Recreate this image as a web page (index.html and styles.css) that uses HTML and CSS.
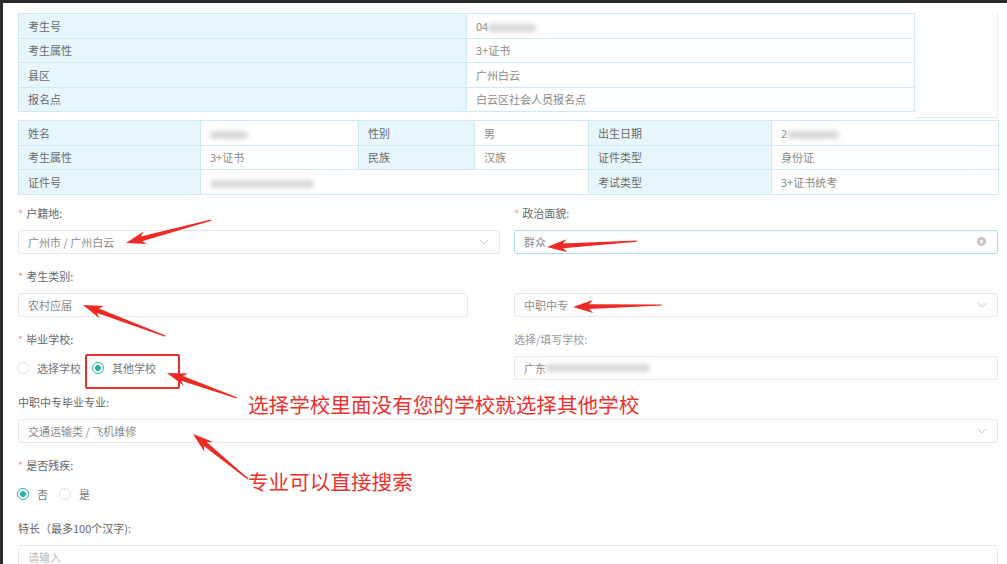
FILE: index.html
```html
<!DOCTYPE html>
<html lang="zh-CN">

<head>
    <meta charset="UTF-8" />
    <meta name="viewport" content="width=device-width, initial-scale=1.0" />
    <title>报名信息</title>
    <link rel="stylesheet" href="styles.css">
</head>

<body>
    <div class="screen">
        <div class="top">
            <table class="info info-a">
                <tr><td class="k">考生号</td><td>04<span class="blur" style="width:48px"></span></td></tr>
                <tr><td class="k">考生属性</td><td>3+证书</td></tr>
                <tr><td class="k">县区</td><td>广州白云</td></tr>
                <tr><td class="k">报名点</td><td>白云区社会人员报名点</td></tr>
            </table>
            <div class="side"></div>
        </div>

        <table class="info info-b">
            <colgroup>
                <col style="width:182px"><col style="width:158px"><col style="width:116px">
                <col style="width:114px"><col style="width:183px"><col style="width:227px">
            </colgroup>
            <tr>
                <td class="k">姓名</td><td><span class="blur" style="width:38px"></span></td>
                <td class="k">性别</td><td>男</td>
                <td class="k">出生日期</td><td>2<span class="blur" style="width:52px"></span></td>
            </tr>
            <tr>
                <td class="k">考生属性</td><td>3+证书</td>
                <td class="k">民族</td><td>汉族</td>
                <td class="k">证件类型</td><td>身份证</td>
            </tr>
            <tr>
                <td class="k">证件号</td><td colspan="3"><span class="blur" style="width:104px"></span></td>
                <td class="k">考试类型</td><td>3+证书统考</td>
            </tr>
        </table>

        <div class="form">
            <div class="field">
                <div class="label"><i>*</i>户籍地:</div>
                <div class="box">广州市 / 广州白云
                    <svg class="arrow-down" viewBox="0 0 10 6"><polyline points="1,1 5,5 9,1" /></svg>
                </div>
            </div>
            <div class="field">
                <div class="label"><i>*</i>政治面貌:</div>
                <div class="box focus">群众
                    <svg class="clear" viewBox="0 0 10 10"><circle cx="5" cy="5" r="5" /><path d="M3.2 3.2 6.8 6.8M6.8 3.2 3.2 6.8" /></svg>
                </div>
            </div>

            <div class="field">
                <div class="label"><i>*</i>考生类别:</div>
                <div class="box short">农村应届</div>
            </div>
            <div class="field">
                <div class="label"></div>
                <div class="box">中职中专
                    <svg class="arrow-down" viewBox="0 0 10 6"><polyline points="1,1 5,5 9,1" /></svg>
                </div>
            </div>

            <div class="field">
                <div class="label"><i>*</i>毕业学校:</div>
                <div class="radios">
                    <span class="radio"><b class="dot"></b>选择学校</span>
                    <span class="radio marked"><b class="dot on"></b>其他学校</span>
                </div>
            </div>
            <div class="field">
                <div class="label faint">选择/填写学校:</div>
                <div class="box">广东<span class="blur" style="width:104px"></span></div>
            </div>

            <div class="field wide">
                <div class="label">中职中专毕业专业:</div>
                <div class="box">交通运输类 / 飞机维修
                    <svg class="arrow-down" viewBox="0 0 10 6"><polyline points="1,1 5,5 9,1" /></svg>
                </div>
            </div>

            <div class="field wide">
                <div class="label"><i>*</i>是否残疾:</div>
                <div class="radios">
                    <span class="radio"><b class="dot on"></b>否</span>
                    <span class="radio"><b class="dot"></b>是</span>
                </div>
            </div>

            <div class="field wide">
                <div class="label">特长（最多100个汉字):</div>
                <div class="box placeholder">请输入</div>
            </div>
        </div>
    </div>

    <!-- 标注：红色箭头和说明文字 -->
    <svg class="marks" viewBox="0 0 1007 564">
        <g fill="#ee2a24">
            <polygon transform="translate(126,243) rotate(-15.1)" points="0,0 20,-6.5 16,-2.4 88,-0.6 88,0.6 16,2.4 20,6.5" />
            <polygon transform="translate(547,247) rotate(-3.8)" points="0,0 20,-6.5 16,-2.4 90,-0.6 90,0.6 16,2.4 20,6.5" />
            <polygon transform="translate(83,305) rotate(20.7)" points="0,0 20,-6.5 16,-2.4 88,-0.6 88,0.6 16,2.4 20,6.5" />
            <polygon transform="translate(573,307) rotate(-1.3)" points="0,0 20,-6.5 16,-2.4 89,-0.6 89,0.6 16,2.4 20,6.5" />
            <polygon transform="translate(167,373) rotate(19.6)" points="0,0 20,-6.5 16,-2.4 74,-0.6 74,0.6 16,2.4 20,6.5" />
            <polygon transform="translate(193,434) rotate(39.3)" points="0,0 20,-6.5 16,-2.4 71,-0.6 71,0.6 16,2.4 20,6.5" />
        </g>
    </svg>
    <div class="note note-school">选择学校里面没有您的学校就选择其他学校</div>
    <div class="note note-major">专业可以直接搜索</div>
</body>

</html>
```

FILE: styles.css
```css
* {
    margin: 0;
    padding: 0;
    box-sizing: border-box;
}

body {
    position: relative;
    width: 1007px;
    height: 564px;
    overflow: hidden;
    background: #2a2a2a;
    font-family: "Noto Sans CJK SC", "Noto Sans", sans-serif;
    font-size: 11px;
    color: #666;
}

.screen {
    height: 561px;
    margin: 3px 0 0 3px;
    padding: 10px 9px 0 15px;
    background: #fff;
}

.top {
    display: flex;
    height: 105px;
}

.info {
    border-collapse: collapse;
    table-layout: fixed;
}

.info td {
    height: 24.5px;
    padding: 0 9px;
    border: 1px solid #cfe8f3;
    color: #8a8a8a;
    white-space: nowrap;
    vertical-align: middle;
}

.info td.k {
    background: #e7f6fc;
    color: #6a6a6a;
}

.info-a {
    width: 897px;
    height: 98px;
}

.info-a td {
    width: 50%;
}

.side {
    flex: 1;
    border-right: 1px solid #e6eef2;
    border-bottom: 1px solid #e2ecf1;
}

.info-b {
    width: 980px;
    height: 74px;
    margin-top: 2px;
}

.blur {
    display: inline-block;
    height: 8px;
    vertical-align: middle;
    background: #d6d6d6;
    border-radius: 4px;
    filter: blur(2.5px);
}

.form {
    display: grid;
    grid-template-columns: 482px 484px;
    column-gap: 14px;
    margin-top: 10px;
}

.field {
    margin-bottom: 14px;
}

.field.wide {
    grid-column: 1 / 3;
}

.label {
    height: 16px;
    line-height: 16px;
    margin-bottom: 9px;
    color: #666;
}

.label i {
    font-style: normal;
    color: #f08f8f;
    margin-right: 3px;
}

.label.faint {
    color: #9a9a9a;
}

.box {
    display: flex;
    align-items: center;
    height: 24px;
    padding: 0 9px;
    border: 1px solid #e6e8ec;
    border-radius: 3px;
    color: #8a8a8a;
}

.box.short {
    width: 450px;
}

.box.focus {
    border-color: #a9dfe3;
}

.box.placeholder {
    color: #bbb;
}

.arrow-down {
    width: 10px;
    height: 6px;
    margin-left: auto;
    margin-right: 1px;
    fill: none;
    stroke: #c5c8ce;
    stroke-width: 1;
}

.clear {
    width: 9px;
    height: 9px;
    margin-left: auto;
    margin-right: 2px;
}

.clear circle {
    fill: #c2c4c8;
}

.clear path {
    stroke: #fff;
    stroke-width: 1.2;
}

.radios {
    display: flex;
    align-items: center;
    height: 24px;
}

.radio {
    position: relative;
    display: inline-flex;
    align-items: center;
    margin-right: 12px;
    color: #777;
}

.dot {
    width: 12px;
    height: 12px;
    margin: 0 8px 0 -1px;
    border: 1px solid #dcdfe6;
    border-radius: 50%;
    background: #fff;
}

.dot.on {
    border-color: #22b3a7;
    background: radial-gradient(circle, #22b3a7 0 2.6px, #fff 3.2px);
}

.radio.marked::after {
    content: "";
    position: absolute;
    top: -6px;
    bottom: -13px;
    left: -8px;
    right: -24px;
    border: 2px solid #e5302c;
    border-radius: 2px;
}

.marks {
    position: absolute;
    top: 0;
    left: 0;
    width: 1007px;
    height: 564px;
}

.note {
    position: absolute;
    left: 248px;
    font-size: 20.6px;
    line-height: 22px;
    color: #e8332e;
    white-space: nowrap;
}

.note-school {
    top: 393px;
}

.note-major {
    top: 470px;
}
```
